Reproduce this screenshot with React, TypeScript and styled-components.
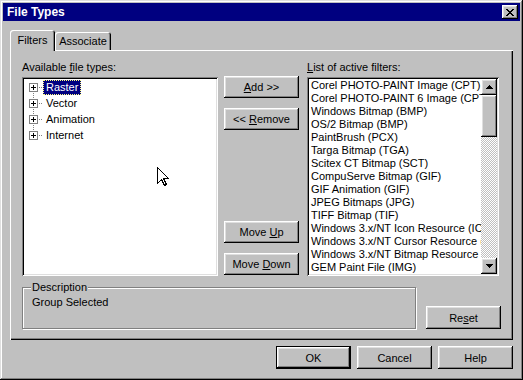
import styled, { createGlobalStyle } from 'styled-components'

const GlobalStyle = createGlobalStyle`
  html, body {
    margin: 0;
    padding: 0;
    background: #c0c0c0;
  }
  body {
    font-family: 'Liberation Sans', Arial, sans-serif;
    font-size: 11px;
    color: #000;
  }
  * {
    box-sizing: border-box;
  }
`

const raised = `
  box-shadow: inset -1px -1px #000, inset 1px 1px #fff,
    inset -2px -2px #808080, inset 2px 2px #dfdfdf;
`
const sunken = `
  box-shadow: inset 1px 1px #808080, inset -1px -1px #fff,
    inset 2px 2px #000, inset -2px -2px #dfdfdf;
`

const Window = styled.div`
  width: 523px;
  height: 380px;
  padding: 3px;
  display: flex;
  flex-direction: column;
  background: #c0c0c0;
  box-shadow: inset -1px -1px #000, inset 1px 1px #dfdfdf,
    inset -2px -2px #808080, inset 2px 2px #fff;
`
const TitleBar = styled.div`
  height: 18px;
  padding: 0 2px 0 4px;
  display: flex;
  align-items: center;
  justify-content: space-between;
  background: #000080;
  color: #fff;
  font-weight: bold;
  font-size: 12px;
`
const CloseButton = styled.div`
  width: 16px;
  height: 14px;
  display: flex;
  align-items: center;
  justify-content: center;
  background: #c0c0c0;
  ${raised}
`
const Body = styled.div`
  flex: 1;
  padding: 9px 7px 0 7px;
  display: flex;
  flex-direction: column;
`
const TabStrip = styled.div`
  height: 20px;
  display: flex;
  align-items: flex-end;
`
const Tab = styled.div<{ $active?: boolean; $width: number }>`
  position: relative;
  width: ${({ $width }) => $width}px;
  height: ${({ $active }) => ($active ? 21 : 18)}px;
  margin-bottom: ${({ $active }) => ($active ? -1 : 0)}px;
  z-index: ${({ $active }) => ($active ? 1 : 0)};
  line-height: ${({ $active }) => ($active ? 20 : 18)}px;
  text-align: center;
  background: #c0c0c0;
  border-radius: 3px 3px 0 0;
  box-shadow: inset 1px 1px #fff, inset -1px 0 #000, inset -2px 0 #808080;
`
const TabPanel = styled.div`
  height: 290px;
  padding: 11px 12px;
  display: flex;
  flex-direction: column;
  box-shadow: inset 1px 1px #fff, inset -1px -1px #000,
    inset -2px -2px #808080;
`
const TopRow = styled.div`
  height: 210px;
  display: grid;
  grid-template-columns: 196px 75px 194px;
  column-gap: 6px;
  & > :last-child {
    margin-left: 2px;
  }
`
const Column = styled.div`
  display: flex;
  flex-direction: column;
`
const FieldLabel = styled.div`
  line-height: 13px;
  margin-bottom: 3px;
  white-space: nowrap;
`
const SunkenBox = styled.div`
  position: relative;
  flex: 1;
  padding: 2px;
  background: #fff;
  overflow: hidden;
  ${sunken}
`
const ButtonColumn = styled.div`
  padding: 15px 0 1px;
  display: flex;
  flex-direction: column;
  gap: 10px;
`
const Spacer = styled.div`
  flex: 1;
`
const Button = styled.button<{ $default?: boolean; $short?: boolean }>`
  width: 75px;
  height: ${({ $short }) => ($short ? 22 : 23)}px;
  flex: none;
  padding: 0;
  border: none;
  font: inherit;
  color: #000;
  background: #c0c0c0;
  ${({ $default }) =>
    $default
      ? `box-shadow: inset 0 0 0 1px #000, inset -2px -2px #000, inset 2px 2px #fff,
          inset -3px -3px #808080, inset 3px 3px #dfdfdf;`
      : raised}
`

/* tree */
const TreeList = styled.div`
  padding-left: 5px;
`
const TreeRow = styled.div`
  height: 16px;
  display: flex;
  align-items: center;
`
const Expander = styled.div<{ $first?: boolean; $last?: boolean }>`
  position: relative;
  width: 9px;
  height: 16px;
  display: flex;
  align-items: center;
  &::before {
    content: '';
    position: absolute;
    left: 4px;
    width: 1px;
    top: ${({ $first }) => ($first ? 8 : 0)}px;
    bottom: ${({ $last }) => ($last ? 8 : 0)}px;
    background: repeating-linear-gradient(
      to bottom,
      #808080 0 1px,
      transparent 1px 2px
    );
  }
  svg {
    position: relative;
  }
`
const Connector = styled.span`
  width: 5px;
  height: 1px;
  background: repeating-linear-gradient(
    to right,
    transparent 0 1px,
    #808080 1px 2px
  );
`
const TreeLabel = styled.span<{ $selected?: boolean }>`
  padding: 0 2px;
  line-height: 13px;
  white-space: nowrap;
  border: 1px ${({ $selected }) => ($selected ? 'dotted #ffff80' : 'solid transparent')};
  background: ${({ $selected }) => ($selected ? '#000080' : 'transparent')};
  color: ${({ $selected }) => ($selected ? '#fff' : '#000')};
`
const Cursor = styled.svg`
  position: absolute;
  left: 135px;
  top: 90px;
`

/* filter list */
const ListBox = styled(SunkenBox)`
  display: flex;
`
const ListItems = styled.div`
  flex: 1;
  overflow: hidden;
`
const ListItem = styled.div`
  height: 13px;
  line-height: 13px;
  padding-left: 2px;
  white-space: nowrap;
`
const ScrollBar = styled.div`
  width: 16px;
  display: flex;
  flex-direction: column;
`
const ScrollButton = styled.div<{ $height: number }>`
  height: ${({ $height }) => $height}px;
  display: flex;
  align-items: center;
  justify-content: center;
  background: #c0c0c0;
  ${raised}
`
const ScrollTrack = styled.div`
  flex: 1;
  background: repeating-conic-gradient(#c0c0c0 0 25%, #fff 0 50%) 0 0 / 2px
    2px;
`

/* bottom of panel */
const BottomRow = styled.div`
  margin-top: 10px;
  height: 48px;
  display: flex;
  align-items: flex-end;
  gap: 10px;
`
const GroupBox = styled.fieldset`
  margin: 0;
  width: 395px;
  height: 48px;
  padding: 0 8px;
  border: 1px solid #808080;
  box-shadow: inset 1px 1px #fff, 1px 1px #fff;
`
const GroupLegend = styled.legend`
  padding: 0 1px;
  line-height: 13px;
  background: #c0c0c0;
`
const GroupText = styled.div`
  padding: 2px 1px 0;
  line-height: 13px;
`
const DialogButtons = styled.div`
  margin-top: 6px;
  display: flex;
  justify-content: flex-end;
  gap: 6px;
`

const fileTypes = ['Raster', 'Vector', 'Animation', 'Internet']

const filters = [
  'Corel PHOTO-PAINT Image (CPT)',
  'Corel PHOTO-PAINT 6 Image (CPT)',
  'Windows Bitmap (BMP)',
  'OS/2 Bitmap (BMP)',
  'PaintBrush (PCX)',
  'Targa Bitmap (TGA)',
  'Scitex CT Bitmap (SCT)',
  'CompuServe Bitmap (GIF)',
  'GIF Animation (GIF)',
  'JPEG Bitmaps (JPG)',
  'TIFF Bitmap (TIF)',
  'Windows 3.x/NT Icon Resource (ICO)',
  'Windows 3.x/NT Cursor Resource (CUR)',
  'Windows 3.x/NT Bitmap Resource (BMP)',
  'GEM Paint File (IMG)',
]

const CloseGlyph = () => (
  <svg width="8" height="7" viewBox="0 0 8 7" shapeRendering="crispEdges">
    <path d="M0 0h2v1H0zM6 0h2v1H6zM1 1h2v1H1zM5 1h2v1H5zM2 2h4v1H2zM3 3h2v1H3zM2 4h4v1H2zM1 5h2v1H1zM5 5h2v1H5zM0 6h2v1H0zM6 6h2v1H6z" fill="#000" />
  </svg>
)

const PlusBox = () => (
  <svg width="9" height="9" viewBox="0 0 9 9" shapeRendering="crispEdges">
    <rect x="0.5" y="0.5" width="8" height="8" fill="#fff" stroke="#808080" />
    <path d="M2 4h5v1H2zM4 2h1v5H4z" fill="#000" />
  </svg>
)

const Arrow = ({ down }: { down?: boolean }) => (
  <svg width="7" height="4" viewBox="0 0 7 4" shapeRendering="crispEdges">
    <path
      d={
        down
          ? 'M0 0h7v1H0zM1 1h5v1H1zM2 2h3v1H2zM3 3h1v1H3z'
          : 'M3 0h1v1H3zM2 1h3v1H2zM1 2h5v1H1zM0 3h7v1H0z'
      }
      fill="#000"
    />
  </svg>
)

export default function App() {
  return (
    <>
      <GlobalStyle />
      <Window>
        <TitleBar>
          <span>File Types</span>
          <CloseButton>
            <CloseGlyph />
          </CloseButton>
        </TitleBar>
        <Body>
          <TabStrip>
            <Tab $active $width={45}>
              Filters
            </Tab>
            <Tab $width={56}>Associate</Tab>
          </TabStrip>
          <TabPanel>
            <TopRow>
              <Column>
                <FieldLabel>
                  Available <u>f</u>ile types:
                </FieldLabel>
                <SunkenBox>
                  <TreeList>
                    {fileTypes.map((name, i) => (
                      <TreeRow key={name}>
                        <Expander $first={i === 0} $last={i === fileTypes.length - 1}>
                          <PlusBox />
                        </Expander>
                        <Connector />
                        <TreeLabel $selected={i === 0}>{name}</TreeLabel>
                      </TreeRow>
                    ))}
                  </TreeList>
                  <Cursor width="12" height="19" viewBox="0 0 12 19">
                    <path
                      d="M0.5 0.5V16.5L4.5 12.5L7.5 18.5L9.5 17.5L6.5 11.5H11.5Z"
                      fill="#fff"
                      stroke="#000"
                      shapeRendering="crispEdges"
                    />
                  </Cursor>
                </SunkenBox>
              </Column>
              <ButtonColumn>
                <Button $short>
                  <u>A</u>dd &gt;&gt;
                </Button>
                <Button $short>
                  &lt;&lt; <u>R</u>emove
                </Button>
                <Spacer />
                <Button $short>
                  Move <u>U</u>p
                </Button>
                <Button $short>
                  Move <u>D</u>own
                </Button>
              </ButtonColumn>
              <Column>
                <FieldLabel>
                  <u>L</u>ist of active filters:
                </FieldLabel>
                <ListBox>
                  <ListItems>
                    {filters.map((f) => (
                      <ListItem key={f}>{f}</ListItem>
                    ))}
                  </ListItems>
                  <ScrollBar>
                    <ScrollButton $height={16}>
                      <Arrow />
                    </ScrollButton>
                    <ScrollButton $height={42} />
                    <ScrollTrack />
                    <ScrollButton $height={16}>
                      <Arrow down />
                    </ScrollButton>
                  </ScrollBar>
                </ListBox>
              </Column>
            </TopRow>
            <BottomRow>
              <GroupBox>
                <GroupLegend>Description</GroupLegend>
                <GroupText>Group Selected</GroupText>
              </GroupBox>
              <Button>
                Re<u>s</u>et
              </Button>
            </BottomRow>
          </TabPanel>
          <DialogButtons>
            <Button $default>OK</Button>
            <Button>Cancel</Button>
            <Button>Help</Button>
          </DialogButtons>
        </Body>
      </Window>
    </>
  )
}
